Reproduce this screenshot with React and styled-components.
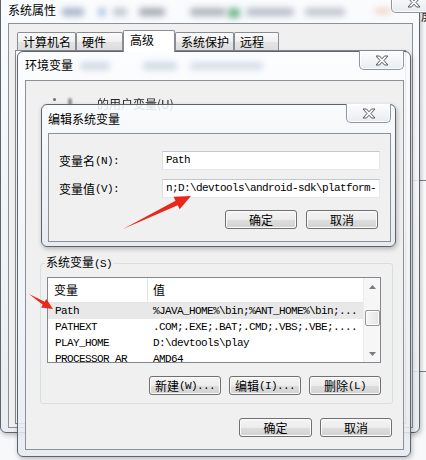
import React from 'react';
import styled, { createGlobalStyle } from 'styled-components';

const mono = `"Liberation Mono", "DejaVu Sans Mono", monospace`;
const cjk = `"Noto Sans CJK SC", "Liberation Sans", sans-serif`;

const Global = createGlobalStyle`
  html, body { margin: 0; padding: 0; background: #f7f8fa; }
  body { font-family: ${cjk}; font-size: 12px; color: #000; }
`;

const Desktop = styled.div`
  position: relative;
  width: 426px;
  height: 460px;
  overflow: hidden;
  background: #f7f8fa;
`;

const BackWindow = styled.div`
  position: absolute;
  left: 396px;
  top: 180px;
  width: 60px;
  height: 190px;
  border: 1px solid #7a7f86;
  background: #fbfbfb;
`;

const BackGlyph = styled.div`
  position: absolute;
  left: 421px;
  top: 9px;
  font-size: 12px;
  line-height: 14px;
  color: #222;
`;

const Win = styled.div`
  position: absolute;
  left: ${p => p.$x}px;
  top: ${p => p.$y}px;
  width: ${p => p.$w}px;
  height: ${p => p.$h}px;
  box-sizing: border-box;
  border: 1px solid #5d646d;
  border-radius: 6px;
  background: linear-gradient(180deg, rgba(251, 252, 254, 0.86), rgba(230, 235, 241, 0.86));
  padding: ${p => p.$pad};
  display: flex;
  flex-direction: column;
  box-shadow: 1px 2px 5px rgba(0, 0, 0, 0.25);
`;

const TitleBar = styled.div`
  height: ${p => p.$h}px;
  flex: none;
  display: flex;
  align-items: flex-start;
`;

const TitleText = styled.div`
  padding-top: ${p => p.$top}px;
  line-height: 14px;
  font-size: 12px;
  white-space: nowrap;
`;

const BlurRow = styled.div`
  display: flex;
  align-items: flex-start;
  padding-top: ${p => p.$top}px;
`;

const Blob = styled.span`
  display: block;
  flex: none;
  margin-left: ${p => p.$ml}px;
  width: ${p => p.$w}px;
  height: ${p => p.$h || 8}px;
  background: ${p => p.$c};
  border-radius: 3px;
  filter: blur(${p => p.$b || 3}px);
  opacity: ${p => p.$o || 0.6};
`;

const Spacer = styled.div`
  flex: 1;
`;

const CloseBtn = styled.div`
  flex: none;
  width: 45px;
  height: ${p => p.$h}px;
  margin-top: -1px;
  box-sizing: border-box;
  border: 1px solid #8d96a1;
  border-top: none;
  border-radius: 0 0 5px 5px;
  background: linear-gradient(180deg, #fdfdfe, #e8ecf1);
  box-shadow: inset 0 0 0 1px rgba(255, 255, 255, 0.8);
  display: flex;
  align-items: center;
  justify-content: center;
`;

const Client = styled.div`
  flex: 1;
  min-height: 0;
  box-sizing: border-box;
  background: #f0f0f0;
  border: 1px solid #8a9199;
  display: flex;
  flex-direction: column;
`;

/* ---------- System properties (tabs) ---------- */
const TabStrip = styled.div`
  display: flex;
  align-items: flex-end;
  height: 26px;
  padding-left: 8px;
  flex: none;
`;

const Tab = styled.div`
  position: relative;
  z-index: ${p => (p.$active ? 2 : 1)};
  width: ${p => p.$w}px;
  height: ${p => (p.$active ? 22 : 18)}px;
  margin-bottom: ${p => (p.$active ? -2 : 0)}px;
  box-sizing: border-box;
  border: 1px solid #898c95;
  border-bottom: none;
  border-radius: 2px 2px 0 0;
  background: ${p => (p.$active ? '#ffffff' : 'linear-gradient(180deg, #fafafa 0%, #f0f0f0 50%, #e4e4e4 51%, #dddddd 100%)')};
  padding-left: ${p => (p.$active ? 6 : 5)}px;
  padding-bottom: ${p => (p.$active ? 3 : 0)}px;
  display: flex;
  align-items: center;
  font-size: 12px;
  line-height: 14px;
  white-space: nowrap;
`;

const TabPanel = styled.div`
  flex: 1;
  margin: 0 6px 3px 6px;
  border: 1px solid #898c95;
  background: #ffffff;
`;

/* ---------- Environment variables ---------- */
const UserArea = styled.div`
  height: 174px;
  flex: none;
  box-sizing: border-box;
  padding: 17px 0 0 27px;
  display: flex;
  align-items: flex-start;
`;

const DimLabel = styled.div`
  margin-left: 25px;
  margin-top: -1px;
  font-size: 12px;
  line-height: 14px;
  color: #222;
  filter: blur(0.6px);
  white-space: nowrap;
`;

const Group = styled.fieldset`
  margin: 0 10px 0 14px;
  padding: 6px 11px 10px 6px;
  height: 149px;
  box-sizing: border-box;
  border: 1px solid #d5dfe5;
  border-radius: 3px;
  min-width: 0;
`;

const Legend = styled.legend`
  padding: 0 1px;
  margin-left: -2px;
  font-size: 12px;
  line-height: 14px;
`;

const List = styled.div`
  height: 86px;
  box-sizing: border-box;
  border: 1px solid #828790;
  background: #ffffff;
  display: flex;
`;

const ListMain = styled.div`
  flex: 1;
  min-width: 0;
  overflow: hidden;
`;

const HeaderRow = styled.div`
  display: grid;
  grid-template-columns: 100px 1fr;
  height: 25px;
  box-sizing: border-box;
  border-bottom: 1px solid #e5e5e5;
`;

const HeaderCell = styled.div`
  display: flex;
  align-items: center;
  padding-left: ${p => p.$pl}px;
  border-right: ${p => (p.$divider ? '1px solid #e5e5e5' : 'none')};
  font-size: 12px;
  line-height: 14px;
`;

const Row = styled.div`
  display: grid;
  grid-template-columns: 100px 1fr;
  height: 16px;
  background: ${p => (p.$selected ? '#e8e8e8' : 'transparent')};
  font-family: ${mono};
  font-size: 11px;
  letter-spacing: -0.6px;
  line-height: 16px;
  white-space: nowrap;
`;

const Cell = styled.div`
  padding-left: ${p => p.$pl}px;
  overflow: hidden;
`;

const ScrollBar = styled.div`
  width: 17px;
  flex: none;
  display: flex;
  flex-direction: column;
  background: #f6f6f6;
  border-left: 1px solid #ececec;
  box-sizing: border-box;
`;

const ScrollArrow = styled.div`
  height: 17px;
  flex: none;
  display: flex;
  align-items: center;
  justify-content: center;
`;

const ScrollTrack = styled.div`
  flex: 1;
  display: flex;
  flex-direction: column;
  align-items: center;
`;

const Thumb = styled.div`
  margin-top: 15px;
  width: 15px;
  height: 16px;
  box-sizing: border-box;
  border: 1px solid #979797;
  border-radius: 2px;
  background: linear-gradient(90deg, #f7f7f7, #e3e3e3);
  box-shadow: inset 0 0 0 1px #fdfdfd;
`;

const ButtonRow = styled.div`
  display: flex;
  justify-content: flex-end;
  gap: ${p => p.$gap}px;
  margin-top: ${p => p.$mt};
  padding: ${p => p.$pad || '0'};
  flex: none;
`;

const Btn = styled.div`
  width: ${p => p.$w || 72}px;
  height: 19px;
  box-sizing: border-box;
  border: 1px solid #707070;
  border-radius: 3px;
  background: linear-gradient(180deg, #f5f5f5 0%, #ececec 50%, #dedede 51%, #d2d2d2 100%);
  box-shadow: inset 0 0 0 1px #fbfbfb;
  display: flex;
  align-items: center;
  justify-content: center;
  font-size: 12px;
  line-height: 14px;
  white-space: nowrap;
`;

const Latin = styled.span`
  font-family: ${mono};
  font-size: 11px;
  letter-spacing: -0.6px;
`;

/* ---------- Edit dialog ---------- */
const Form = styled.div`
  display: grid;
  grid-template-columns: 103px 1fr;
  row-gap: 9px;
  padding: 17px 10px 0 10px;
`;

const FormLabel = styled.div`
  display: flex;
  align-items: center;
  font-size: 12px;
  line-height: 14px;
  white-space: nowrap;
`;

const Field = styled.div`
  height: 19px;
  box-sizing: border-box;
  border: 1px solid;
  border-color: #c3c8cd #e3e9ef #e3e9ef #dbdfe6;
  background: #ffffff;
  padding-left: 3px;
  font-family: ${mono};
  font-size: 11px;
  letter-spacing: -0.6px;
  line-height: 17px;
  white-space: nowrap;
  overflow: hidden;
`;

const Overlay = styled.svg`
  position: absolute;
  left: 0;
  top: 0;
  width: 426px;
  height: 460px;
  pointer-events: none;
`;

const CloseGlyph = () => (
  <svg width="14" height="11" viewBox="0 0 14 11">
    <polygon
      points="1,1 4.5,1 7,3.8 9.5,1 13,1 9,5.5 13,10 9.5,10 7,7.2 4.5,10 1,10 5,5.5"
      fill="#f6f6f6"
      stroke="#5b5b5b"
      strokeWidth="1"
      strokeLinejoin="round"
    />
  </svg>
);

const UpArrow = () => (
  <svg width="7" height="4" viewBox="0 0 7 4"><polygon points="0,4 3.5,0 7,4" fill="#7a7a7a" /></svg>
);
const DownArrow = () => (
  <svg width="7" height="4" viewBox="0 0 7 4"><polygon points="0,0 7,0 3.5,4" fill="#7a7a7a" /></svg>
);

const tabs = [
  { label: '计算机名', w: 59 },
  { label: '硬件', w: 47 },
  { label: '高级', w: 52, active: true },
  { label: '系统保护', w: 59 },
  { label: '远程', w: 45 },
];

const rows = [
  { name: 'Path', value: '%JAVA_HOME%\\bin;%ANT_HOME%\\bin;...', selected: true },
  { name: 'PATHEXT', value: '.COM;.EXE;.BAT;.CMD;.VBS;.VBE;....' },
  { name: 'PLAY_HOME', value: 'D:\\devtools\\play' },
  { name: 'PROCESSOR_AR', value: 'AMD64' },
];

export default function App() {
  return (
    <>
      <Global />
      <Desktop>
        <BackWindow />
        <BackGlyph>屏</BackGlyph>

        {/* 系统属性 */}
        <Win $x={0} $y={-8} $w={420} $h={441} $pad="0 6px 4px 7px">
          <TitleBar $h={30}>
            <TitleText $top={10}>系统属性</TitleText>
            <BlurRow $top={15}>
              <Blob $ml={6} $w={22} $c="#6f86a6" />
              <Blob $ml={15} $w={6} $c="#4f7fc0" />
              <Blob $ml={8} $w={14} $c="#9aa4b0" />
              <Blob $ml={12} $w={26} $c="#6e7784" />
              <Blob $ml={25} $w={36} $c="#7d8692" />
              <Blob $ml={2} $w={12} $c="#3f9d64" $h={10} $o={0.7} />
              <Blob $ml={6} $w={48} $c="#8d98a8" />
              <Blob $ml={11} $w={40} $c="#9ba3ae" />
              <Blob $ml={30} $w={16} $c="#e08a6a" $h={6} $o={0.35} />
            </BlurRow>
            <Spacer />
            <CloseBtn $h={21}><CloseGlyph /></CloseBtn>
          </TitleBar>
          <Client>
            <TabStrip>
              {tabs.map(t => (
                <Tab key={t.label} $w={t.w} $active={t.active}>{t.label}</Tab>
              ))}
            </TabStrip>
            <TabPanel />
          </Client>
        </Win>

        {/* 环境变量 */}
        <Win $x={17} $y={51} $w={394} $h={406} $pad="0 6px 6px 7px">
          <TitleBar $h={28}>
            <TitleText $top={6}>环境变量</TitleText>
            <BlurRow $top={10}>
              <Blob $ml={7} $w={30} $c="#a7b8d0" $o={0.5} />
              <Blob $ml={33} $w={34} $c="#a7b8d0" $o={0.5} />
              <Blob $ml={13} $w={73} $c="#b2c1d6" $o={0.5} />
            </BlurRow>
            <Spacer />
            <CloseBtn $h={19}><CloseGlyph /></CloseBtn>
          </TitleBar>
          <Client>
            <UserArea>
              <Blob $ml={0} $w={3} $h={3} $c="#333" $b={0.6} $o={0.7} />
              <Blob $ml={12} $w={4} $h={8} $c="#555" $b={1} $o={0.6} />
              <DimLabel>的用户变量(U)</DimLabel>
            </UserArea>
            <Group>
              <Legend>系统变量<Latin>(S)</Latin></Legend>
              <List>
                <ListMain>
                  <HeaderRow>
                    <HeaderCell $pl={6} $divider>变量</HeaderCell>
                    <HeaderCell $pl={5}>值</HeaderCell>
                  </HeaderRow>
                  {rows.map(r => (
                    <Row key={r.name} $selected={r.selected}>
                      <Cell $pl={7}>{r.name}</Cell>
                      <Cell $pl={5}>{r.value}</Cell>
                    </Row>
                  ))}
                </ListMain>
                <ScrollBar>
                  <ScrollArrow><UpArrow /></ScrollArrow>
                  <ScrollTrack><Thumb /></ScrollTrack>
                  <ScrollArrow><DownArrow /></ScrollArrow>
                </ScrollBar>
              </List>
              <ButtonRow $gap={8} $mt="13px">
                <Btn>新建<Latin>(W)...</Latin></Btn>
                <Btn>编辑<Latin>(I)...</Latin></Btn>
                <Btn>删除<Latin>(L)</Latin></Btn>
              </ButtonRow>
            </Group>
            <ButtonRow $gap={8} $mt="auto" $pad="0 11px 12px 0">
              <Btn $w={73}>确定</Btn>
              <Btn>取消</Btn>
            </ButtonRow>
          </Client>
        </Win>

        {/* 编辑系统变量 */}
        <Win $x={41} $y={104} $w={355} $h={143} $pad="0 4px 4px 6px">
          <TitleBar $h={28}>
            <TitleText $top={7}>编辑系统变量</TitleText>
            <Spacer />
            <CloseBtn $h={19}><CloseGlyph /></CloseBtn>
          </TitleBar>
          <Client>
            <Form>
              <FormLabel>变量名<Latin>(N):</Latin></FormLabel>
              <Field>Path</Field>
              <FormLabel>变量值<Latin>(V):</Latin></FormLabel>
              <Field>n;D:\devtools\android-sdk\platform-</Field>
            </Form>
            <ButtonRow $gap={9} $mt="12px" $pad="0 12px 0 0">
              <Btn>确定</Btn>
              <Btn>取消</Btn>
            </ButtonRow>
          </Client>
        </Win>

        <Overlay viewBox="0 0 426 460">
          <polygon
            points="123,229 177.7,205.3 179.7,209.3 191,196 173.5,196.7 175.5,200.8"
            fill="#e6281d"
          />
          <polygon
            points="29,294 42.75,304.7 41.05,307.4 53,309 46.35,299 44.65,301.7"
            fill="#e6281d"
          />
        </Overlay>
      </Desktop>
    </>
  );
}
